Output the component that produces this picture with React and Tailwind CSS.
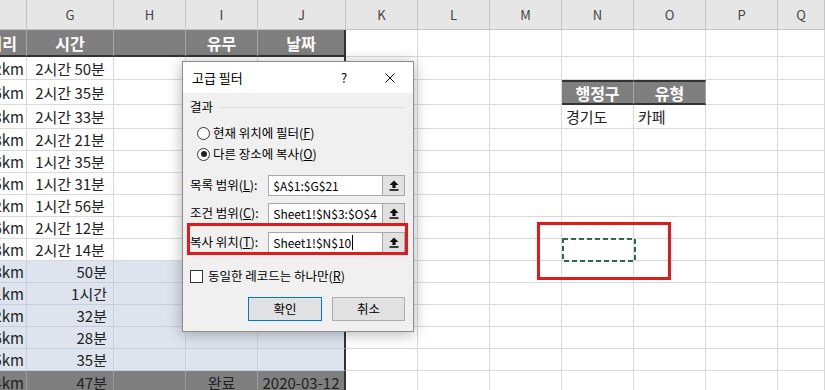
import React from "react";

const letters = ["", "G", "H", "I", "J", "K", "L", "M", "N", "O", "P", "Q"];

const distances = ["2km", "6km", "3km", "8km", "6km", "5km", "2km", "6km", "8km", "8km", "1km", "2km", "6km", "5km"];
const times = [
  "2시간 50분", "2시간 35분", "2시간 33분", "2시간 21분", "1시간 35분", "1시간 31분", "1시간 56분",
  "2시간 12분", "2시간 14분", "50분", "1시간", "32분", "28분", "35분",
];

function Cell({ className = "", children }) {
  return (
    <div className={`flex items-center overflow-hidden whitespace-nowrap leading-none ${className}`}>
      {children}
    </div>
  );
}

function UpIcon() {
  return (
    <svg width="10" height="11" viewBox="0 0 10 11">
      <path d="M5 0.5 L9.5 5 H6.6 V8 H3.4 V5 H0.5 Z" fill="#111" />
      <rect x="0.5" y="9.2" width="9" height="1.6" fill="#111" />
    </svg>
  );
}

function RangeField({ label, keyChar, value, cursor }) {
  return (
    <div className="flex h-[21px] items-center">
      <span className="w-[79px] text-[12.5px] text-black">
        {label}(<u>{keyChar}</u>):
      </span>
      <div className="flex h-full w-[116px] items-center overflow-hidden border border-[#a8a8a8] bg-white pl-[4px] text-[12px] text-black">
        {value}
        {cursor && <span className="ml-px h-[15px] w-px bg-black" />}
      </div>
      <div className="flex h-full w-[22px] items-center justify-center border border-l-0 border-[#a8a8a8] bg-[#e1e1e1]">
        <UpIcon />
      </div>
    </div>
  );
}

function Radio({ checked, children }) {
  return (
    <div className="ml-[7px] flex h-[16px] items-center text-[12.5px] text-black">
      <span className="flex h-[13px] w-[13px] items-center justify-center rounded-full border border-[#333] bg-white">
        {checked && <span className="h-[6px] w-[6px] rounded-full bg-[#222]" />}
      </span>
      <span className="ml-[3px]">{children}</span>
    </div>
  );
}

function FilterDialog() {
  return (
    <div className="absolute left-[182px] top-[61px] flex h-[271px] w-[232px] flex-col border border-[#8c8c8c] bg-[#f0f0f0] shadow-[0_2px_14px_rgba(0,0,0,0.3)]">
      <div className="flex h-[31px] items-center bg-white pl-[9px] text-[13px] text-black">
        <span>고급 필터</span>
        <span className="ml-auto flex w-[46px] justify-center">?</span>
        <span className="flex w-[46px] justify-center">
          <svg width="10" height="10" viewBox="0 0 10 10">
            <path d="M0.5 0.5 L9.5 9.5 M9.5 0.5 L0.5 9.5" stroke="#000" strokeWidth="1" />
          </svg>
        </span>
      </div>

      <div className="flex flex-1 flex-col pl-[7px] pr-[8px]">
        <div className="mt-[6px] flex h-[16px] items-center text-[12.5px] text-black">
          <span>결과</span>
          <span className="ml-[6px] h-px flex-1 bg-[#dcdcdc]" />
        </div>
        <div className="mt-[10px]">
          <Radio>
            현재 위치에 필터(<u>F</u>)
          </Radio>
        </div>
        <div className="mt-[5px]">
          <Radio checked>
            다른 장소에 복사(<u>O</u>)
          </Radio>
        </div>

        <div className="mt-[13px]">
          <RangeField label="목록 범위" keyChar="L" value="$A$1:$G$21" />
        </div>
        <div className="mt-[7px]">
          <RangeField label="조건 범위" keyChar="C" value="Sheet1!$N$3:$O$4" />
        </div>
        <div className="mt-[8px]">
          <RangeField label="복사 위치" keyChar="T" value="Sheet1!$N$10" cursor />
        </div>

        <div className="mt-[15px] flex h-[16px] items-center text-[12.5px] text-black">
          <span className="h-[13px] w-[13px] border border-[#333] bg-white" />
          <span className="ml-[5px]">
            동일한 레코드는 하나만(<u>R</u>)
          </span>
        </div>

        <div className="mt-[13px] flex h-[24px] justify-end gap-[10px] text-[12.5px] text-black">
          <button className="w-[74px] border border-[#0078d7] bg-[#e1e1e1]">확인</button>
          <button className="w-[73px] border border-[#adadad] bg-[#e1e1e1]">취소</button>
        </div>
      </div>

      {/* 강조 표시 */}
      <div className="absolute left-[4px] top-[161px] h-[32px] w-[221px] border-[3px] border-[#e01b1b]" />
    </div>
  );
}

export default function App() {
  const cells = [];
  const plain = "border-r border-b border-[#d9d9d9] bg-white";

  // column letters
  letters.forEach((l, i) =>
    cells.push(
      <Cell key={`l${i}`} className="justify-center border-r border-b border-[#c4c4c4] bg-[#e6e6e6] text-[13px] text-[#444]">
        {l}
      </Cell>
    )
  );

  // table header
  const head = "bg-[#7f7f7f] border-r border-r-[#a3a3a3] border-b-2 border-b-[#333] text-[16px] font-bold text-white";
  cells.push(<Cell key="h0" className={`${head} justify-end pr-[9px]`}>거리</Cell>);
  cells.push(<Cell key="h1" className={`${head} justify-center`}>시간</Cell>);
  cells.push(<Cell key="h2" className={head} />);
  cells.push(<Cell key="h3" className={`${head} justify-center`}>유무</Cell>);
  cells.push(
    <Cell key="h4" className="justify-center border-r-2 border-b-2 border-[#333] bg-[#7f7f7f] text-[16px] font-bold text-white">
      날짜
    </Cell>
  );
  for (let c = 5; c < 12; c++) cells.push(<Cell key={`h${c}`} className={plain} />);

  // data rows
  times.forEach((t, i) => {
    const blue = i >= 9;
    const bg = blue ? "bg-[#dde4ee]" : "bg-white";
    const line = blue ? "border-[#c6cfdb]" : "border-[#d9d9d9]";
    const base = `border-r border-b ${line} ${bg} text-[15px] text-[#222]`;

    cells.push(<Cell key={`r${i}a`} className={`${base} justify-end pr-[2px]`}>{distances[i]}</Cell>);
    cells.push(
      <Cell key={`r${i}b`} className={`${base} ${blue ? "justify-end pr-[6px]" : "justify-center"}`}>
        {t}
      </Cell>
    );
    cells.push(<Cell key={`r${i}c`} className={base} />);
    cells.push(<Cell key={`r${i}d`} className={base} />);
    cells.push(
      <Cell key={`r${i}e`} className={`border-b ${line} border-r-2 border-r-[#333] ${bg}`} />
    );

    for (let c = 5; c < 12; c++) {
      if (i === 1 && (c === 8 || c === 9)) {
        cells.push(
          <Cell
            key={`r${i}-${c}`}
            className="justify-center border-y-2 border-y-[#333] border-r border-r-[#a3a3a3] bg-[#7f7f7f] text-[16px] font-bold text-white"
          >
            {c === 8 ? "행정구" : "유형"}
          </Cell>
        );
      } else if (i === 2 && (c === 8 || c === 9)) {
        cells.push(
          <Cell key={`r${i}-${c}`} className={`${plain} pl-[4px] text-[15px] text-[#222]`}>
            {c === 8 ? "경기도" : "카페"}
          </Cell>
        );
      } else {
        cells.push(<Cell key={`r${i}-${c}`} className={plain} />);
      }
    }
  });

  // last row
  const grey = "bg-[#7f7f7f] border-r border-r-[#9a9a9a] text-[15px] text-[#222]";
  cells.push(<Cell key="z0" className={`${grey} justify-end pr-[2px]`}>4km</Cell>);
  cells.push(<Cell key="z1" className={`${grey} justify-end pr-[6px]`}>47분</Cell>);
  cells.push(<Cell key="z2" className={grey} />);
  cells.push(<Cell key="z3" className={`${grey} justify-center`}>완료</Cell>);
  cells.push(
    <Cell key="z4" className="justify-center border-r-2 border-[#333] bg-[#7f7f7f] text-[15px] text-[#222]">
      2020-03-12
    </Cell>
  );
  for (let c = 5; c < 12; c++) cells.push(<Cell key={`z${c}`} className={plain} />);

  return (
    <div className="relative h-[390px] w-[825px] overflow-hidden bg-white font-['Noto_Sans_CJK_KR',sans-serif]">
      <div className="grid grid-cols-[27px_87px_72px_72px_88px_72px_72px_72px_72px_72px_72px_47px] grid-rows-[30px_27px_23px_25px_24px_repeat(12,22px)]">
        {cells}
      </div>

      <FilterDialog />

      {/* 복사 위치 선택 영역 */}
      <div className="absolute left-[537px] top-[222px] h-[58px] w-[134px] border-[3px] border-[#e01b1b]" />
      <svg className="absolute left-[562px] top-[238px]" width="74" height="24">
        <rect x="1" y="1" width="72" height="22" fill="none" stroke="#2b6a52" strokeWidth="2" strokeDasharray="5 3" />
      </svg>
    </div>
  );
}
